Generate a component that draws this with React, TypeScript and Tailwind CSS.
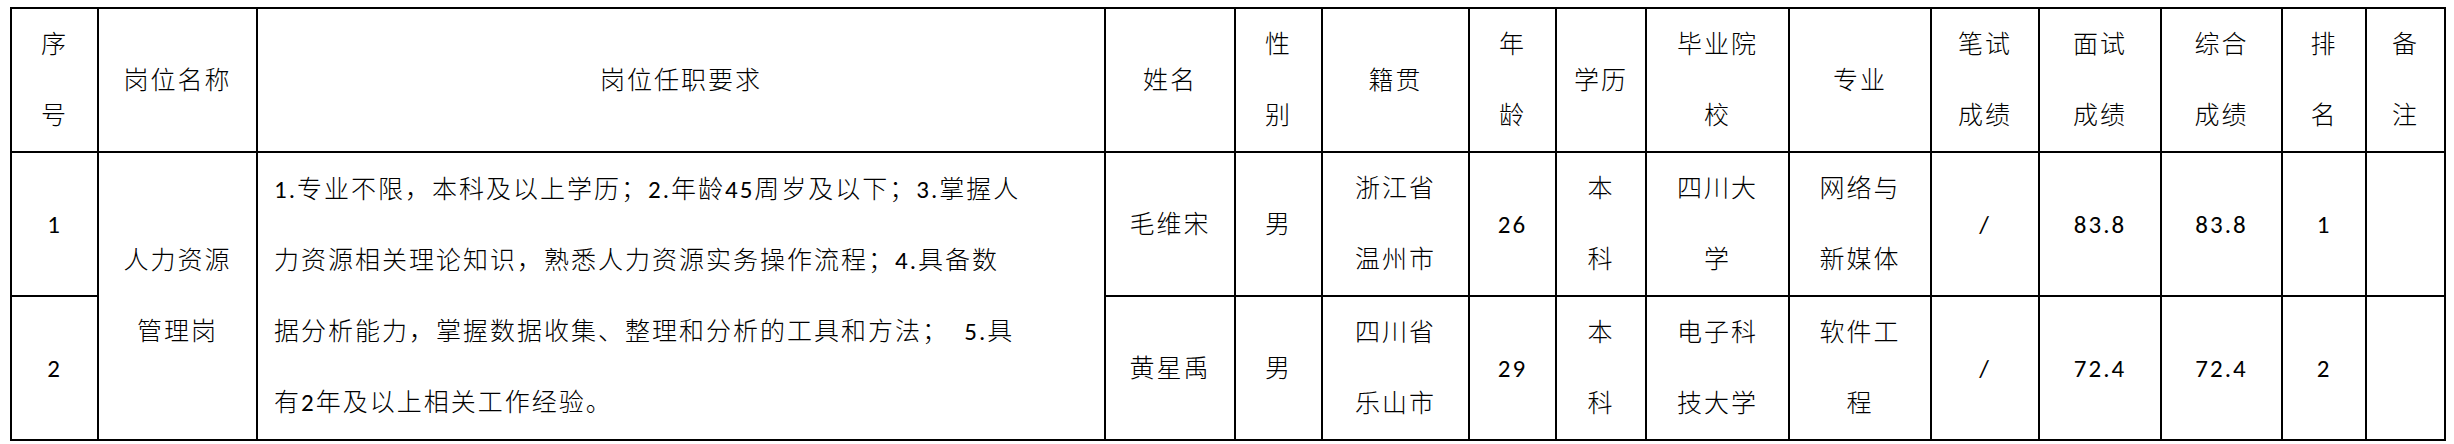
const cols = [87, 159, 848, 130, 87, 147, 87, 90, 143, 142, 108, 122, 121, 84, 79]

const headers: string[][] = [
  ["序", "号"],
  ["岗位名称"],
  ["岗位任职要求"],
  ["姓名"],
  ["性", "别"],
  ["籍贯"],
  ["年", "龄"],
  ["学历"],
  ["毕业院", "校"],
  ["专业"],
  ["笔试", "成绩"],
  ["面试", "成绩"],
  ["综合", "成绩"],
  ["排", "名"],
  ["备", "注"],
]

const duty = [
  "1.专业不限，本科及以上学历；2.年龄45周岁及以下；3.掌握人",
  "力资源相关理论知识，熟悉人力资源实务操作流程；4.具备数",
  "据分析能力，掌握数据收集、整理和分析的工具和方法；  5.具",
  "有2年及以上相关工作经验。",
]

const people = [
  { no: "1", name: "毛维宋", sex: "男", home: ["浙江省", "温州市"], age: "26", edu: ["本", "科"], school: ["四川大", "学"], major: ["网络与", "新媒体"], written: "/", interview: "83.8", total: "83.8", rank: "1" },
  { no: "2", name: "黄星禹", sex: "男", home: ["四川省", "乐山市"], age: "29", edu: ["本", "科"], school: ["电子科", "技大学"], major: ["软件工", "程"], written: "/", interview: "72.4", total: "72.4", rank: "2" },
]

const cell = "border-2 border-black text-center align-middle p-0"

const Lines = ({ lines }: { lines: string[] }) => (
  <>
    {lines.map((l, i) => (
      <div key={i} className="whitespace-nowrap">{l}</div>
    ))}
  </>
)

export default function App() {
  return (
    <div className="w-[2454px] h-[444px] bg-white pt-[7px] pl-[10px]">
      <table
        className="table-fixed border-collapse border-2 border-black text-black text-[25px] leading-[71px] tracking-[2px] font-light"
        style={{ fontFamily: '"Carlito", "Lato", "Noto Sans CJK SC", sans-serif', width: 2434 }}
      >
        <colgroup>
          {cols.map((w, i) => (
            <col key={i} style={{ width: w }} />
          ))}
        </colgroup>
        <thead>
          <tr className="h-[142px]">
            {headers.map((h, i) => (
              <th key={i} className={`${cell} font-light`}>
                <Lines lines={h} />
              </th>
            ))}
          </tr>
        </thead>
        <tbody>
          {people.map((p, r) => (
            <tr key={p.no} className="h-[143px]">
              <td className={cell}>{p.no}</td>
              {r === 0 && (
                <>
                  <td rowSpan={2} className={cell}>
                    <Lines lines={["人力资源", "管理岗"]} />
                  </td>
                  <td rowSpan={2} className="border-2 border-black align-middle text-left pl-[16px]">
                    {duty.map((l, i) => (
                      <div key={i} className="whitespace-pre">{l}</div>
                    ))}
                  </td>
                </>
              )}
              <td className={cell}>{p.name}</td>
              <td className={cell}>{p.sex}</td>
              <td className={cell}><Lines lines={p.home} /></td>
              <td className={cell}>{p.age}</td>
              <td className={cell}><Lines lines={p.edu} /></td>
              <td className={cell}><Lines lines={p.school} /></td>
              <td className={cell}><Lines lines={p.major} /></td>
              <td className={cell}>{p.written}</td>
              <td className={cell}>{p.interview}</td>
              <td className={cell}>{p.total}</td>
              <td className={cell}>{p.rank}</td>
              <td className={cell}></td>
            </tr>
          ))}
        </tbody>
      </table>
    </div>
  )
}
